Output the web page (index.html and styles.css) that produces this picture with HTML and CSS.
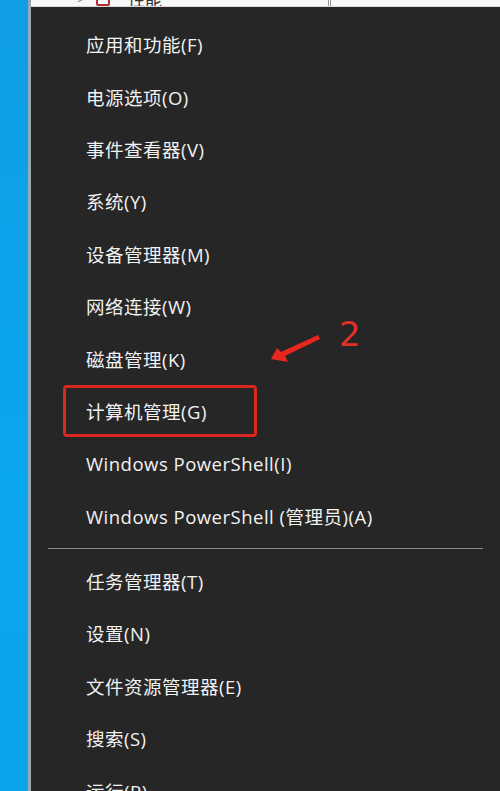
FILE: index.html
```html
<!DOCTYPE html>
<html lang="zh-CN">
  <head>
    <meta charset="UTF-8" />
    <meta name="viewport" content="width=device-width, initial-scale=1.0" />
    <title>Win+X 菜单</title>
    <link rel="stylesheet" href="styles.css">
  </head>
  <body>
    <div class="desktop"></div>
    <div class="edge"></div>
    <div class="panel">
      <!-- 后面窗口露出的一条 -->
      <div class="behind">
        <div class="behind-row">
          <span class="chev">&gt;</span>
          <span class="perf-icon"></span>
          <span class="perf-text">性能</span>
          <span class="col-line"></span>
        </div>
      </div>

      <div class="menu">
        <div class="item">应用和功能(F)</div>
        <div class="item">电源选项(O)</div>
        <div class="item">事件查看器(V)</div>
        <div class="item">系统(Y)</div>
        <div class="item">设备管理器(M)</div>
        <div class="item">网络连接(W)</div>
        <div class="item">磁盘管理(K)</div>
        <div class="item marked">计算机管理(G)</div>
        <div class="item">Windows PowerShell(I)</div>
        <div class="item">Windows PowerShell (管理员)(A)</div>
        <div class="sep"><hr></div>
        <div class="item">任务管理器(T)</div>
        <div class="item">设置(N)</div>
        <div class="item">文件资源管理器(E)</div>
        <div class="item">搜索(S)</div>
        <div class="item">运行(R)</div>

        <!-- 标注：箭头和序号 -->
        <svg class="arrow" width="60" height="40" viewBox="0 0 60 40">
          <polygon points="6,31 12,20 16,24 53,7 55,11 20,28 23,34" fill="#e8281e" />
        </svg>
        <span class="step">2</span>
      </div>
    </div>
  </body>
</html>
```

FILE: styles.css
```css
* {
  margin: 0;
  padding: 0;
  box-sizing: border-box;
}
html, body {
  height: 100%;
}
body {
  display: flex;
  overflow: hidden;
  background: #262626;
  font-family: "Open Sans", "Noto Sans CJK SC", sans-serif;
}
.desktop {
  width: 28px;
  flex-shrink: 0;
  background: linear-gradient(#109ee4, #0aa6ee 60%, #0ba4ea);
}
.edge {
  width: 3px;
  flex-shrink: 0;
  background: #9aa8b2;
}
.panel {
  flex: 1;
  display: flex;
  flex-direction: column;
}

/* 背后窗口 */
.behind {
  height: 7px;
  flex-shrink: 0;
  overflow: hidden;
  background: #f7f7f7;
  border-bottom: 1px solid #d8d8d8;
}
.behind-row {
  display: flex;
  align-items: center;
  height: 20px;
  margin-top: -12px;
  color: #333;
  font-size: 17px;
}
.chev {
  margin-left: 46px;
  color: #888;
  font-size: 14px;
}
.perf-icon {
  width: 14px;
  height: 16px;
  margin-left: 11px;
  border: 2px solid #b03030;
  border-radius: 2px;
}
.perf-text {
  margin-left: 18px;
}
.col-line {
  width: 3px;
  height: 20px;
  margin-left: 166px;
  border-left: 1px solid #999;
  border-right: 1px solid #999;
}

/* 菜单 */
.menu {
  position: relative;
  padding-top: 11px;
  color: #f2f2f2;
  font-size: 18.5px;
  letter-spacing: 0.5px;
}
.item {
  height: 52.4px;
  display: flex;
  align-items: center;
  padding-left: 55px;
  white-space: nowrap;
}
.item.marked {
  margin-left: 32px;
  width: 194px;
  padding-left: 20px;
  border: 3px solid #d8281f;
  border-radius: 4px;
}
.sep {
  height: 13px;
  padding: 6px 17px 0 17px;
}
.sep hr {
  border: none;
  height: 1px;
  background: #8a8a8a;
}

.arrow {
  position: absolute;
  left: 234px;
  top: 321px;
}
.step {
  position: absolute;
  left: 308px;
  top: 307px;
  color: #e0302a;
  font-family: "DejaVu Sans", sans-serif;
  font-size: 34px;
  letter-spacing: 0;
}
```
